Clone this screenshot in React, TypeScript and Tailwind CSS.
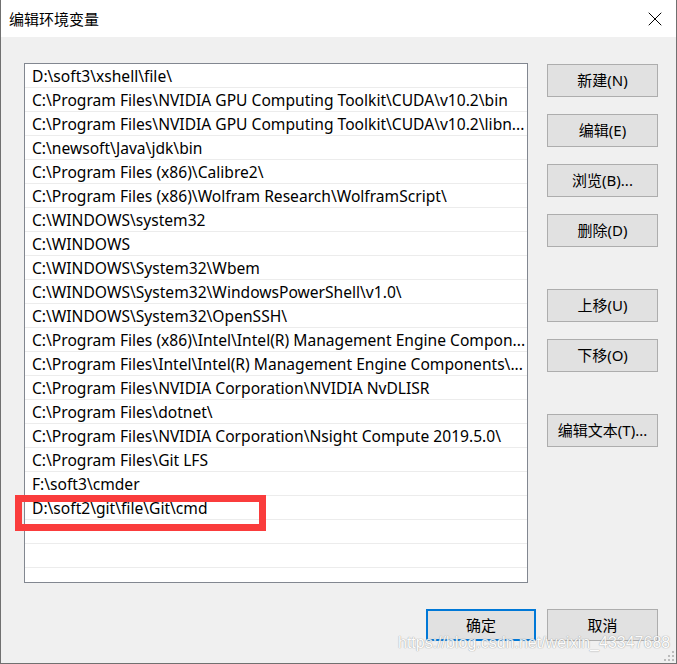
import { X } from "lucide-react";

const paths = [
  "D:\\soft3\\xshell\\file\\",
  "C:\\Program Files\\NVIDIA GPU Computing Toolkit\\CUDA\\v10.2\\bin",
  "C:\\Program Files\\NVIDIA GPU Computing Toolkit\\CUDA\\v10.2\\libn...",
  "C:\\newsoft\\Java\\jdk\\bin",
  "C:\\Program Files (x86)\\Calibre2\\",
  "C:\\Program Files (x86)\\Wolfram Research\\WolframScript\\",
  "C:\\WINDOWS\\system32",
  "C:\\WINDOWS",
  "C:\\WINDOWS\\System32\\Wbem",
  "C:\\WINDOWS\\System32\\WindowsPowerShell\\v1.0\\",
  "C:\\WINDOWS\\System32\\OpenSSH\\",
  "C:\\Program Files (x86)\\Intel\\Intel(R) Management Engine Compon...",
  "C:\\Program Files\\Intel\\Intel(R) Management Engine Components\\...",
  "C:\\Program Files\\NVIDIA Corporation\\NVIDIA NvDLISR",
  "C:\\Program Files\\dotnet\\",
  "C:\\Program Files\\NVIDIA Corporation\\Nsight Compute 2019.5.0\\",
  "C:\\Program Files\\Git LFS",
  "F:\\soft3\\cmder",
  "D:\\soft2\\git\\file\\Git\\cmd",
  "",
  "",
  "",
];

function SideButton({ label, className = "" }: { label: string; className?: string }) {
  return (
    <button
      className={`h-[33px] w-[111px] border border-[#adadad] bg-[#e1e1e1] text-[15px] text-black ${className}`}
    >
      {label}
    </button>
  );
}

export default function App() {
  return (
    <div
      className="relative flex h-[664px] w-[677px] flex-col overflow-hidden border-x border-b border-[#707070] bg-[#f0f0f0]"
      style={{ fontFamily: '"Noto Sans", "Noto Sans CJK SC", sans-serif' }}
    >
      {/* Title bar */}
      <div className="flex h-[37px] shrink-0 items-center justify-between bg-white pl-[8px] pr-[9px]">
        <span className="pt-[1px] text-[15px] text-black">编辑环境变量</span>
        <X className="h-[24px] w-[24px] text-black" strokeWidth={1} />
      </div>

      {/* Body */}
      <div className="flex flex-1 flex-col pl-[23px] pt-[26px]">
        <div className="flex items-start">
          <div className="h-[520px] w-[504px] overflow-hidden border border-[#828790] bg-white">
            {paths.map((p, i) => (
              <div
                key={i}
                className="flex h-[24px] items-center truncate border-b border-[#ececec] pl-[7px] pt-[2px] text-[15.6px] leading-none text-black"
              >
                {p}
              </div>
            ))}
          </div>

          <div className="ml-[19px] mt-[1px] flex flex-col">
            <SideButton label="新建(N)" />
            <SideButton label="编辑(E)" className="mt-[17px]" />
            <SideButton label="浏览(B)..." className="mt-[17px]" />
            <SideButton label="删除(D)" className="mt-[17px]" />
            <SideButton label="上移(U)" className="mt-[42px]" />
            <SideButton label="下移(O)" className="mt-[17px]" />
            <SideButton label="编辑文本(T)..." className="mt-[42px]" />
          </div>
        </div>

        {/* Dialog buttons */}
        <div className="mt-[26px] flex justify-end gap-[11px] pr-[18px]">
          <button className="h-[32px] w-[110px] border-2 border-[#0078d7] bg-[#e1e1e1] text-[15px] text-black">
            确定
          </button>
          <button className="h-[32px] w-[111px] border border-[#adadad] bg-[#e1e1e1] text-[15px] text-black">
            取消
          </button>
        </div>
      </div>

      {/* Highlight box around the new entry */}
      <div className="absolute left-[14px] top-[495px] h-[36px] w-[251px] border-[7px] border-[#fa3c3c]" />

      {/* Watermark */}
      <div
        className="absolute left-[397px] top-[634px] text-[16px] leading-[18px] text-white"
        style={{
          fontFamily: '"Liberation Sans", sans-serif',
          textShadow: "0 0 1px #9a9a9a, 0 0 1px #9a9a9a",
          opacity: 0.85,
        }}
      >
        https://blog.csdn.net/weixin_43347688
      </div>

      {/* Resize grip */}
      <svg className="absolute bottom-[2px] right-[2px]" width="10" height="10" viewBox="0 0 10 10">
        <rect x="8" y="0" width="2" height="2" fill="#bcbcbc" />
        <rect x="4" y="4" width="2" height="2" fill="#bcbcbc" />
        <rect x="8" y="4" width="2" height="2" fill="#bcbcbc" />
        <rect x="0" y="8" width="2" height="2" fill="#bcbcbc" />
        <rect x="4" y="8" width="2" height="2" fill="#bcbcbc" />
        <rect x="8" y="8" width="2" height="2" fill="#bcbcbc" />
      </svg>
    </div>
  );
}
